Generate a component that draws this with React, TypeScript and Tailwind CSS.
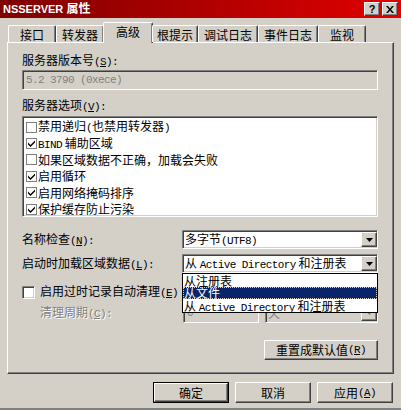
import React from "react";

const raised =
  "border border-t-white border-l-white border-r-[#404040] border-b-[#404040] shadow-[inset_-1px_-1px_#808080,inset_1px_1px_#d4d0c8]";
const sunken =
  "border border-t-[#808080] border-l-[#808080] border-r-white border-b-white shadow-[inset_1px_1px_#404040,inset_-1px_-1px_#d4d0c8]";

const A = ({ children }: { children: React.ReactNode }) => (
  <span className="font-['Liberation_Mono',monospace] text-[11px] tracking-[-0.6px]">{children}</span>
);

const Arrow = ({ disabled = false }: { disabled?: boolean }) => (
  <div className={`w-[16px] h-full ${raised} bg-[#d4d0c8] flex items-center justify-center`}>
    <svg width="7" height="4" viewBox="0 0 7 4">
      <path d="M0 0H7L3.5 4Z" fill={disabled ? "#808080" : "#000"} />
    </svg>
  </div>
);

const Check = ({ checked }: { checked: boolean }) => (
  <div className="w-[11px] h-[11px] border border-[#808080] bg-white flex items-center justify-center shrink-0">
    {checked && (
      <svg width="7" height="7" viewBox="0 0 7 7">
        <path d="M0 2.5L2.5 5L7 0.5V2.5L2.5 7L0 4.5Z" fill="#000" />
      </svg>
    )}
  </div>
);

const tabs: [string, number][] = [
  ["接口", 48],
  ["转发器", 48],
  ["高级", 50],
  ["根提示", 46],
  ["调试日志", 60],
  ["事件日志", 60],
  ["监视", 48],
];

export default function App() {
  const options: [React.ReactNode, boolean][] = [
    [<>禁用递归<A>(</A>也禁用转发器<A>)</A></>, false],
    [<><A>BIND</A> 辅助区域</>, true],
    [<>如果区域数据不正确，加载会失败</>, false],
    [<>启用循环</>, true],
    [<>启用网络掩码排序</>, true],
    [<>保护缓存防止污染</>, true],
  ];
  return (
    <div className="w-[401px] h-[410px] bg-[#d4d0c8] flex flex-col overflow-hidden font-['Noto_Sans_CJK_SC',sans-serif] text-[12px] leading-[14px] text-black border-b-2 border-b-[#808080]">
      {/* title bar */}
      <div className="h-[18px] shrink-0 bg-linear-to-r from-[#7e0000] to-[#e20000] flex items-center pl-[3px] pr-[3px]">
        <span className="text-white font-bold text-[11px] leading-[14px] font-['Liberation_Sans','Noto_Sans_CJK_SC',sans-serif]">
          NSSERVER <span className="text-[12px]">属性</span>
        </span>
        <div className="ml-auto flex gap-[2px]">
          <div className={`w-[16px] h-[14px] bg-[#d4d0c8] ${raised} flex items-center justify-center text-[11px] font-bold leading-none font-['Liberation_Sans',sans-serif]`}>
            ?
          </div>
          <div className={`w-[16px] h-[14px] bg-[#d4d0c8] ${raised} flex items-center justify-center`}>
            <svg width="8" height="7" viewBox="0 0 8 7">
              <path d="M0 0h2l2 2.5L6 0h2L5 3.5 8 7H6L4 4.5 2 7H0l3-3.5Z" fill="#000" />
            </svg>
          </div>
        </div>
      </div>

      {/* tabs */}
      <div className="pl-[8px] pt-[4px] h-[24px] shrink-0 flex items-end relative z-10">
        {tabs.map(([t, w], i) => {
          const sel = i === 2;
          return (
            <div
              key={t}
              style={{ width: w }}
              className={`${
                sel
                  ? "h-[21px] -mb-[1px] bg-[#d4d0c8] -mx-[1px] pt-[1px]"
                  : "h-[17px] pt-[1px]"
              } shrink-0 border-t border-l border-t-white border-l-white border-r border-r-[#404040] shadow-[inset_-1px_0_#808080] rounded-t-[2px] flex justify-center text-[12px] leading-[15px]`}
            >
              {t}
            </div>
          );
        })}
      </div>

      {/* panel */}
      <div className="ml-[7px] w-[387px] h-[332px] shrink-0 border border-t-white border-l-white border-r-[#404040] border-b-[#404040] shadow-[inset_-1px_-1px_#808080] pl-[14px]">
        <div className="w-[356px] flex flex-col">
          <div className="mt-[10px] h-[14px]">
            服务器版本号<A>(<u>S</u>):</A>
          </div>
          <div className={`mt-[3px] h-[20px] ${sunken} flex items-center pl-[3px] text-[#808080]`}>
            <A>5.2 3790 (0xece)</A>
          </div>
          <div className="mt-[8px] h-[14px]">
            服务器选项<A>(<u>V</u>):</A>
          </div>
          <div className={`mt-[4px] h-[101px] ${sunken} bg-white pl-[3px] pt-[2px]`}>
            {options.map(([label, c], i) => (
              <div key={i} className="h-[16.4px] flex items-center gap-[1px]">
                <Check checked={c} />
                <span className="whitespace-nowrap">{label}</span>
              </div>
            ))}
          </div>

          <div className="mt-[13px] h-[19px] flex items-center">
            <div className="w-[160px]">
              名称检查<A>(<u>N</u>):</A>
            </div>
            <div className={`flex-1 h-full ${sunken} bg-white flex items-center pl-[2px]`}>
              <span className="flex-1">
                多字节<A>(UTF8)</A>
              </span>
              <div className="h-[15px] mr-[0px]">
                <Arrow />
              </div>
            </div>
          </div>

          <div className="mt-[5px] h-[19px] flex items-center">
            <div className="w-[160px]">
              启动时加载区域数据<A>(<u>L</u>):</A>
            </div>
            <div className="flex-1 h-full relative">
              <div className={`h-full ${sunken} bg-white flex items-center pl-[2px]`}>
                <span className="flex-1 whitespace-nowrap">
                  从 <A>Active Directory</A> 和注册表
                </span>
                <div className="h-[15px]">
                  <Arrow />
                </div>
              </div>
              <div className="absolute left-0 top-full w-full bg-white border border-black z-20 flex flex-col">
                <div className="h-[13px] leading-[13px] pl-[1px]">从注册表</div>
                <div className="h-[12px] leading-[12px] pl-[1px] bg-[#0a246a] text-white outline outline-1 outline-dotted outline-[#d4d0c8] -outline-offset-1">
                  从文件
                </div>
                <div className="h-[13px] leading-[13px] pl-[1px] whitespace-nowrap">
                  从 <A>Active Directory</A> 和注册表
                </div>
              </div>
            </div>
          </div>

          <div className="mt-[11px] h-[16px] flex items-center">
            <div className={`w-[13px] h-[13px] ${sunken} bg-white`} />
            <span className="ml-[5px]">
              启用过时记录自动清理<A>(<u>E</u>)</A>
            </span>
          </div>

          <div className="mt-[3px] h-[20px] flex items-center">
            <div className="w-[161px] pl-[18px] text-[#808080] [text-shadow:1px_1px_0_#fff]">
              清理周期<A>(<u>C</u>):</A>
            </div>
            <div className={`w-[76px] h-full ${sunken} pl-[3px] flex items-center text-[#808080]`}>
              <A>0</A>
            </div>
            <div className={`ml-[6px] flex-1 h-full ${sunken} flex items-center pl-[2px] text-[#808080]`}>
              <span className="flex-1">天</span>
              <div className="h-[15px]">
                <Arrow disabled />
              </div>
            </div>
          </div>

          <div className="mt-[17px] flex justify-end">
            <div className={`w-[114px] h-[20px] ${raised} flex items-center justify-center`}>
              重置成默认值<A>(<u>R</u>)</A>
            </div>
          </div>
        </div>
      </div>

      {/* bottom buttons */}
      <div className="mt-[8px] flex justify-end gap-[6px] pr-[8px]">
        <div className="w-[76px] h-[21px] border border-black">
          <div className={`w-full h-full ${raised} flex items-center justify-center`}>确定</div>
        </div>
        <div className={`w-[76px] h-[21px] ${raised} flex items-center justify-center`}>取消</div>
        <div className={`w-[76px] h-[21px] ${raised} flex items-center justify-center`}>
          应用<A>(<u>A</u>)</A>
        </div>
      </div>
    </div>
  );
}
